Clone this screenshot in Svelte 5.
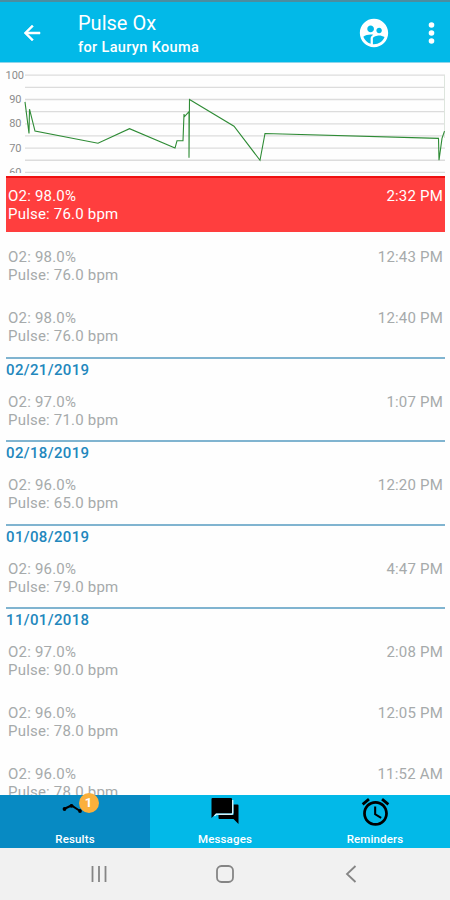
<script>
  const patient = "Lauryn Kouma";

  const groups = [
    {
      date: null,
      readings: [
        { o2: "98.0", pulse: "76.0", time: "2:32 PM", alert: true },
        { o2: "98.0", pulse: "76.0", time: "12:43 PM" },
        { o2: "98.0", pulse: "76.0", time: "12:40 PM" },
      ],
    },
    { date: "02/21/2019", readings: [{ o2: "97.0", pulse: "71.0", time: "1:07 PM" }] },
    { date: "02/18/2019", readings: [{ o2: "96.0", pulse: "65.0", time: "12:20 PM" }] },
    { date: "01/08/2019", readings: [{ o2: "96.0", pulse: "79.0", time: "4:47 PM" }] },
    {
      date: "11/01/2018",
      readings: [
        { o2: "97.0", pulse: "90.0", time: "2:08 PM" },
        { o2: "96.0", pulse: "78.0", time: "12:05 PM" },
        { o2: "96.0", pulse: "78.0", time: "11:52 AM" },
      ],
    },
  ];

  // x position, pulse value
  const points = [
    [25, 89], [29, 76], [29.5, 86], [35, 77], [98, 72], [129.5, 78],
    [175, 70], [177, 73], [183, 73], [184, 84], [184.5, 83], [189, 85],
    [189, 66], [189.5, 90], [234, 79], [260, 65], [265, 76], [438.5, 74],
    [439, 65], [442, 74], [444.5, 77],
  ];

  const chartY = (value) => 12.2 + (100 - value) * 2.43;
  const line = points.map(([x, v]) => `${x},${chartY(v)}`).join(" ");
  const gridLines = [100, 95, 90, 85, 80, 75, 70, 65, 60];
  const labels = [100, 90, 80, 70, 60];
</script>

<div class="screen">
  <header>
    <svg class="back" width="24" height="24" viewBox="0 0 24 24">
      <path d="M20 11H7.83l5.59-5.59L12 4l-8 8 8 8 1.41-1.41L7.83 13H20v-2z" stroke="#fff" stroke-width="0.5" />
    </svg>
    <div class="titles">
      <h1>Pulse Ox</h1>
      <p>for {patient}</p>
    </div>
    <svg class="people" width="34" height="34" viewBox="0 0 24 24">
      <path d="M12 2C6.48 2 2 6.48 2 12s4.48 10 10 10 10-4.48 10-10S17.52 2 12 2zm3.61 6.34c1.07 0 1.93.86 1.93 1.93s-.86 1.93-1.93 1.93-1.93-.86-1.93-1.93c-.01-1.07.86-1.93 1.93-1.93zm-6-1.58c1.3 0 2.36 1.06 2.36 2.36s-1.06 2.36-2.36 2.36-2.36-1.06-2.36-2.36c0-1.31 1.05-2.36 2.36-2.36zm0 9.13v3.75c-2.4-.75-4.3-2.6-5.14-4.96 1.05-1.12 3.67-1.69 5.14-1.69.53 0 1.2.08 1.9.22-1.64.87-1.9 2.02-1.9 2.68zM12 20c-.27 0-.53-.01-.79-.04v-4.07c0-1.42 2.94-2.13 4.4-2.13 1.07 0 2.92.39 3.84 1.15C18.28 17.88 15.39 20 12 20z" />
    </svg>
    <svg class="more" width="8" height="24" viewBox="0 0 8 24">
      <circle cx="4.5" cy="4" r="2.8" />
      <circle cx="4.5" cy="12" r="2.8" />
      <circle cx="4.5" cy="20" r="2.8" />
    </svg>
  </header>

  <svg class="chart" width="450" height="110" viewBox="0 0 450 110">
    {#each gridLines as value}
      <line class="grid" x1="25" x2="445" y1={chartY(value)} y2={chartY(value)} />
    {/each}
    <line class="edge" x1="444.5" x2="444.5" y1="12" y2="75" />
    {#each labels as value}
      <text x={value === 100 ? 24 : 21.5} y={chartY(value) + 3.6} text-anchor="end">{value}</text>
    {/each}
    <polyline points={line} />
  </svg>

  <main>
    {#each groups as group}
      <section class:dated={group.date}>
        {#if group.date}
          <h2>{group.date}</h2>
        {/if}
        {#each group.readings as reading}
          <div class="reading" class:alert={reading.alert}>
            <div>
              <div>O2: {reading.o2}%</div>
              <div>Pulse: {reading.pulse} bpm</div>
            </div>
            <div class="time">{reading.time}</div>
          </div>
        {/each}
      </section>
    {/each}
  </main>

  <nav class="tabs">
    <div class="tab active">
      <div class="icon">
        <svg width="28" height="30" viewBox="0 0 28 30">
          <path d="M3 14 10.5 10.5 19 16" fill="none" stroke="#000" stroke-width="2" />
          <circle cx="3.5" cy="14" r="1.9" />
          <circle cx="10.5" cy="10.8" r="1.9" />
          <circle cx="19" cy="16" r="1.9" />
        </svg>
        <span class="badge">1</span>
      </div>
      <span>Results</span>
    </div>
    <div class="tab">
      <div class="icon">
        <svg width="30" height="32" viewBox="0 0 30 32">
          <path d="M23.5 9.5H27.5Q28.5 9.5 28.5 10.5V29L23.5 24H9.5Q8.5 24 8.5 23V20H23.5z" />
          <path d="M2.5 3H21Q22 3 22 4V17.5Q22 18.5 21 18.5H6L1.5 23V4Q1.5 3 2.5 3z" />
          <path d="M4.5 21 6.3 19.3H21.5Q22.7 19.3 22.7 18V5" fill="none" stroke="#d5f1f9" stroke-width="1.4" />
        </svg>
      </div>
      <span>Messages</span>
    </div>
    <div class="tab">
      <div class="icon">
        <svg width="33" height="34" viewBox="0 0 24 24">
          <path d="M22 5.72l-4.6-3.86-1.29 1.53 4.6 3.86L22 5.72zM7.88 3.39L6.6 1.86 2 5.71l1.29 1.53 4.59-3.85zM12.5 8H11v6l4.75 2.85.75-1.23-4-2.37V8zM12 4c-4.97 0-9 4.03-9 9s4.02 9 9 9c4.97 0 9-4.03 9-9s-4.03-9-9-9zm0 16c-3.87 0-7-3.13-7-7s3.13-7 7-7 7 3.13 7 7-3.13 7-7 7z" />
        </svg>
      </div>
      <span>Reminders</span>
    </div>
  </nav>

  <footer>
    <svg width="20" height="20" viewBox="0 0 20 20">
      <path d="M3.5 2v16M10 2v16M16.5 2v16" />
    </svg>
    <svg width="20" height="20" viewBox="0 0 20 20">
      <rect x="2" y="2" width="16" height="16" rx="4.5" />
    </svg>
    <svg width="20" height="20" viewBox="0 0 20 20">
      <path d="M14.5 2 6 10l8.5 8" />
    </svg>
  </footer>
</div>

<style>
  :global(body) {
    margin: 0;
    background: #fff;
  }

  .screen {
    display: flex;
    flex-direction: column;
    width: 450px;
    height: 900px;
    overflow: hidden;
    background: #fefefe;
    font-family: Roboto, "Liberation Sans", sans-serif;
  }

  header {
    display: flex;
    align-items: center;
    flex: none;
    box-sizing: border-box;
    height: 63px;
    padding: 1px 15px 0 20px;
    border-top: 2px solid #4b8da0;
    border-bottom: 1px solid #8fd5ea;
    background: #02b9e8;
    color: #fff;
    fill: #fff;
  }
  .titles {
    flex: 1;
    margin-left: 34px;
    padding-top: 5px;
  }
  h1 {
    margin: 0;
    font-size: 20px;
    font-weight: 400;
    line-height: 24px;
  }
  .titles p {
    margin: 0;
    font-size: 14.5px;
    font-weight: 500;
    line-height: 25px;
    letter-spacing: 0.35px;
  }
  .more {
    margin-left: 36px;
  }

  .chart {
    display: block;
    flex: none;
    margin-bottom: 3px;
  }
  .chart text {
    font-size: 11px;
    fill: #8c8c8c;
  }
  .grid {
    stroke: #dcdcdc;
    stroke-width: 1.3;
  }
  .edge {
    stroke: #dde5dd;
  }
  polyline {
    fill: none;
    stroke: #2e8b35;
    stroke-width: 1.1;
  }

  main {
    flex: 1;
    min-height: 0;
    overflow: hidden;
    padding: 0 5px 0 6px;
  }
  .dated {
    margin-top: 2.7px;
  }
  h2 {
    box-sizing: border-box;
    height: 24.7px;
    margin: 0;
    border-top: 2px solid #80b4d0;
    color: #2287bd;
    font-size: 15px;
    font-weight: 500;
    line-height: 22px;
    letter-spacing: 0.35px;
  }
  .reading {
    display: flex;
    justify-content: space-between;
    box-sizing: border-box;
    height: 56px;
    padding: 11px 2px 0;
    color: #a6aaab;
    font-size: 15px;
    line-height: 18px;
    letter-spacing: 0.2px;
  }
  .reading + .reading {
    margin-top: 5.2px;
  }
  .alert {
    border-top: 2px solid #ee1111;
    padding-top: 9px;
    background: #ff3e3e;
    color: #fff;
  }

  .tabs {
    display: grid;
    grid-template-columns: repeat(3, 1fr);
    flex: none;
    height: 53px;
    background: #02b9e8;
    color: #fff;
  }
  .tab {
    display: flex;
    flex-direction: column;
    align-items: center;
    font-size: 11.5px;
    font-weight: 500;
    line-height: 14px;
    letter-spacing: 0.15px;
  }
  .active {
    background: #078ac3;
  }
  .icon {
    position: relative;
    height: 37px;
  }
  .badge {
    position: absolute;
    top: -2px;
    left: 17.5px;
    width: 20px;
    height: 20px;
    border-radius: 50%;
    background: #fbb03b;
    font-size: 13px;
    font-weight: 700;
    line-height: 20px;
    text-align: center;
  }

  footer {
    display: flex;
    justify-content: center;
    flex: none;
    gap: 106px;
    box-sizing: border-box;
    height: 52px;
    padding-top: 16px;
    background: #f1f1f1;
    fill: none;
    stroke: #858585;
    stroke-width: 1.8;
  }
</style>
